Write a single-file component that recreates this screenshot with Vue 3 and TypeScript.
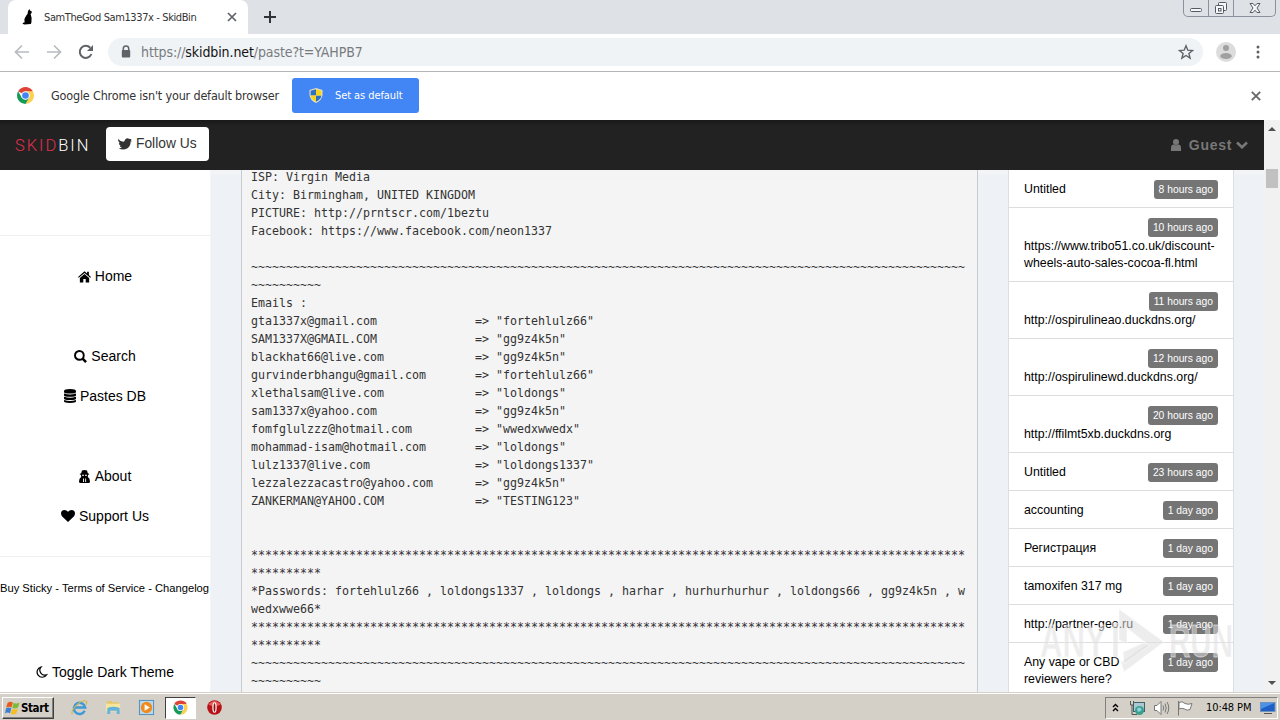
<script setup lang="ts">
interface Recent {
  title: string
  age: string
}

interface NavRow {
  label: string
  icon: string
}

const tilde = '~'.repeat(112)
const stars = '*'.repeat(112)

const accounts: [string, string][] = [
  ['gta1337x@gmail.com', 'fortehlulz66'],
  ['SAM1337X@GMAIL.COM', 'gg9z4k5n'],
  ['blackhat66@live.com', 'gg9z4k5n'],
  ['gurvinderbhangu@gmail.com', 'fortehlulz66'],
  ['xlethalsam@live.com', 'loldongs'],
  ['sam1337x@yahoo.com', 'gg9z4k5n'],
  ['fomfglulzzz@hotmail.com', 'wwedxwwedx'],
  ['mohammad-isam@hotmail.com', 'loldongs'],
  ['lulz1337@live.com', 'loldongs1337'],
  ['lezzalezzacastro@yahoo.com', 'gg9z4k5n'],
  ['ZANKERMAN@YAHOO.COM', 'TESTING123'],
]

const paste = [
  'ISP: Virgin Media',
  'City: Birmingham, UNITED KINGDOM',
  'PICTURE: http://prntscr.com/1beztu',
  'Facebook: https://www.facebook.com/neon1337',
  '',
  tilde,
  'Emails :',
  ...accounts.map(([mail, word]) => `${mail.padEnd(32)}=> "${word}"`),
  '',
  '',
  stars,
  '*Passwords: fortehlulz66 , loldongs1337 , loldongs , harhar , hurhurhurhur , loldongs66 , gg9z4k5n , wwedxwwe66*',
  stars,
  tilde,
].join('\n')

const recents: Recent[] = [
  { title: 'Untitled', age: '8 hours ago' },
  { title: 'https://www.tribo51.co.uk/discount-wheels-auto-sales-cocoa-fl.html', age: '10 hours ago' },
  { title: 'http://ospirulineao.duckdns.org/', age: '11 hours ago' },
  { title: 'http://ospirulinewd.duckdns.org/', age: '12 hours ago' },
  { title: 'http://ffilmt5xb.duckdns.org', age: '20 hours ago' },
  { title: 'Untitled', age: '23 hours ago' },
  { title: 'accounting', age: '1 day ago' },
  { title: 'Регистрация', age: '1 day ago' },
  { title: 'tamoxifen 317 mg', age: '1 day ago' },
  { title: 'http://partner-geo.ru', age: '1 day ago' },
  { title: 'Any vape or CBD reviewers here?', age: '1 day ago' },
]

const navGroups: NavRow[][] = [
  [{ label: 'Home', icon: 'home' }],
  [
    { label: 'Search', icon: 'search' },
    { label: 'Pastes DB', icon: 'db' },
  ],
  [
    { label: 'About', icon: 'about' },
    { label: 'Support Us', icon: 'heart' },
  ],
]
</script>

<template>
  <div class="desktop">
    <header class="tabstrip">
      <div class="tab">
        <svg class="cat" viewBox="0 0 12 16"><path d="M7.600 0 8 1.600 9.800 2.400 9.600 4 8.600 5 9.600 9 9.400 13.400 8.800 15 2.400 15.600.4 14.800 1.600 13.600 2.600 13.400 2.400 10 4 7 5.600 4.800 6 2Z" /></svg>
        <span class="tab-title">SamTheGod Sam1337x - SkidBin</span>
        <svg class="tab-x" viewBox="0 0 10 10"><path d="M1 1 9 9M9 1 1 9" /></svg>
      </div>
      <svg class="plus" viewBox="0 0 12 12"><path d="M6 0V12M0 6H12" /></svg>
      <div class="winctl">
        <span class="wc"><svg width="14" height="16"><rect x="1.500" y="8.500" width="11" height="3" rx="1" /></svg></span>
        <span class="wc"><svg width="14" height="16"><rect x="4.500" y="2.500" width="8" height="8" rx="1" /><rect x="1.500" y="5.500" width="8" height="8" rx="1" /><rect x="4.500" y="8.500" width="2.500" height="2.500" /></svg></span>
        <span class="wc wide"><svg width="14" height="16"><path d="M2 3.500H5L7 5.800 9 3.500H12L9 8 12 12.500H9L7 10.200 5 12.500H2L5 8Z" /></svg></span>
      </div>
    </header>

    <div class="toolbar">
      <svg class="nav dim" viewBox="0 0 16 16"><path d="M15 8H2M8 1.500 1.500 8 8 14.500" /></svg>
      <svg class="nav dim fwd" viewBox="0 0 16 16"><path d="M1 8H14M8 1.500 14.500 8 8 14.500" /></svg>
      <svg class="nav reload" viewBox="0 0 16 16"><path d="M13.400 10A6 6 0 1 1 12.200 3.800" /><path class="solid" d="M15 1V7H9Z" /></svg>
      <div class="omnibox">
        <svg class="lock" viewBox="0 0 10 13"><path d="M2.300 6V3.600a2.700 2.700 0 0 1 5.400 0V6" /><rect x=".8" y="5" width="8.400" height="7.500" rx="1" /></svg>
        <span class="url">https://<b>skidbin.net</b>/paste?t=YAHPB7</span>
        <svg class="star" viewBox="0 0 16 16"><path d="M8 1.800 9.800 6.200 14.500 6.500 10.900 9.500 12.100 14.100 8 11.500 3.900 14.100 5.100 9.500 1.500 6.500 6.200 6.200Z" /></svg>
      </div>
      <svg class="avatar" viewBox="0 0 20 20"><circle cx="10" cy="10" r="10" /><circle class="fg" cx="10" cy="6" r="3" /><ellipse class="fg" cx="10" cy="14" rx="5.800" ry="3" /></svg>
      <svg class="dots" viewBox="0 0 4 14"><circle cx="2" cy="2" r="1.500" /><circle cx="2" cy="7" r="1.500" /><circle cx="2" cy="12" r="1.500" /></svg>
    </div>

    <div class="infobar">
      <svg class="chrome" viewBox="0 0 20 20">
        <path fill="#dc4437" d="M10 10 1.340 5A10 10 0 0 1 18.660 5Z" />
        <path fill="#fdd050" d="M10 5H18.660A10 10 0 0 1 10 20L14.300 12.500Z" />
        <path fill="#159a58" d="M1.340 5A10 10 0 0 0 10 20L14.300 12.500 5.700 12.500Z" />
        <circle cx="10" cy="10" r="5" fill="#fff" /><circle cx="10" cy="10" r="3.900" fill="#4285f4" />
      </svg>
      <span class="info-text">Google Chrome isn't your default browser</span>
      <button class="set-default">
        <svg class="shield" viewBox="0 0 14 15">
          <path fill="#e8e2c0" d="M7 0 13.500 2V7Q13 12 7 15 1 12 .5 7V2Z" />
          <path fill="#2f6fc4" d="M7 1.300V7.500H1.600V2.800ZM7 7.500H12.400Q12 11.500 7 13.800Z" />
          <path fill="#f7d51d" d="M7 1.300V7.500H12.400V2.800ZM7 7.500H1.600Q2 11.500 7 13.800Z" />
        </svg>
        <span>Set as default</span>
      </button>
      <svg class="info-x" viewBox="0 0 10 10"><path d="M.8 .8 9.200 9.200M9.200 .8 .8 9.200" /></svg>
    </div>

    <main class="page">
      <div class="site">
        <nav class="navbar">
          <span class="brand"><em>SKID</em>BIN</span>
          <a class="follow">
            <svg viewBox="0 0 14 12"><path d="M0 1Q2.500 3.500 5.600 3.700 6.400 3.600 6.800 2.300 7.800 0 9.900.4 10.900.3 11.700 1.100L13.500 1 12.800 2.300 14 3.200 12.600 3.600Q12.800 8 9.500 10.200 5 12.800.6 10.300 2.500 10.600 4 9.600 2 9.200 1.700 7.800L2.900 7.600Q.8 7 .8 5L1.900 5.300Q-.2 3.200 0 1Z" /></svg>
            <span>Follow Us</span>
          </a>
          <span class="guest">
            <svg class="person" viewBox="0 0 10 12"><circle cx="5" cy="3" r="3" /><path d="M0 12V9Q0 5.500 2.500 5.500 5 7 7.500 5.500 10 5.500 10 9V12Z" /></svg>
            <span>Guest</span>
            <svg class="chev" viewBox="0 0 12 8"><path d="M1 1.500 6 6.300 11 1.500" /></svg>
          </span>
        </nav>

        <div class="body">
          <aside class="sidebar">
            <div class="menu">
              <div v-for="(group, g) in navGroups" :key="g" class="group">
                <a v-for="row in group" :key="row.label" class="item">
                  <svg v-if="row.icon === 'home'" class="ico" viewBox="0 0 14 13"><path d="M7 .8 9.800 3.200V1.300H11.700V4.800L14 7 13.200 7.900 7 2.700.8 7.900 0 7ZM7 3.800 12 8V13H8.300V9.300H5.700V13H2V8Z" /></svg>
                  <svg v-else-if="row.icon === 'search'" class="ico" viewBox="0 0 14 14"><g fill="none" stroke="#000"><circle cx="5.800" cy="5.800" r="4.700" stroke-width="2.100" /><path d="M9 9 13 13" stroke-width="2.700" /></g></svg>
                  <svg v-else-if="row.icon === 'db'" class="ico db" viewBox="0 0 12 14"><path d="M0 2Q0 0 6 0T12 2V3Q12 4.500 6 4.500T0 3ZM0 4.500Q6 6.500 12 4.500V6.200Q12 7.700 6 7.700T0 6.200ZM0 7.700Q6 9.700 12 7.700V9.400Q12 10.900 6 10.900T0 9.400ZM0 10.900Q6 12.900 12 10.900V12.300Q12 14 6 14T0 12.300Z" /></svg>
                  <svg v-else-if="row.icon === 'about'" class="ico about" viewBox="0 0 11 13"><path d="M3 .5Q5.500 -.3 8 .5L8.800 3.300 10.500 4 9 5 8.800 7Q11 8 11 11.500 11 13 9.500 13H1.500Q0 13 0 11.500 0 8 2.200 7L2 5 .5 4 2.200 3.300Z" /><path fill="#fff" d="M3 4.700H5V5.700H3ZM6 4.700H8V5.700H6ZM4 8.500H4.900V12H4ZM6.200 8.500H7.100V12H6.200Z" /></svg>
                  <svg v-else class="ico heart" viewBox="0 0 14 12"><path d="M7 12 1.200 6.500Q0 5 0 3.500 0 0 3.500 0 5.500 0 7 1.800 8.500 0 10.500 0 14 0 14 3.500 14 5 12.800 6.500Z" /></svg>
                  <span>{{ row.label }}</span>
                </a>
              </div>
            </div>
            <div class="legal">Buy Sticky - Terms of Service - Changelog</div>
            <a class="item toggle">
              <svg class="ico moon" viewBox="0 0 12 12"><path d="M5.500 1A5.200 5.200 0 1 0 11.200 8.800 5 5 0 0 1 5.500 1Z" /></svg>
              <span>Toggle Dark Theme</span>
            </a>
          </aside>

          <section class="content">
            <pre class="paste">{{ paste }}</pre>
            <ul class="recent">
              <li v-for="(r, i) in recents" :key="i"><span class="badge">{{ r.age }}</span><span class="title">{{ r.title }}</span></li>
            </ul>
          </section>
        </div>
      </div>

      <div class="scrollbar">
        <svg class="arrow" viewBox="0 0 8 4"><path d="M0 4 4 0 8 4Z" /></svg>
        <div class="thumb"></div>
        <svg class="arrow down" viewBox="0 0 8 4"><path d="M0 0 4 4 8 0Z" /></svg>
      </div>

      <svg class="watermark" viewBox="0 0 200 70">
        <g class="mark">
          <text x="3" y="51" textLength="66" lengthAdjust="spacingAndGlyphs">ANY</text>
          <path d="M76 17H81V51H76ZM82 3 127 36 87 66 84 56 110 38 90 22V38L82 34Z" />
          <path d="M86 46 108 36 112 40 87 58Z" />
          <text x="132" y="51" textLength="64" lengthAdjust="spacingAndGlyphs">RUN</text>
        </g>
      </svg>
    </main>

    <footer class="taskbar">
      <button class="start">
        <svg viewBox="0 0 15 14">
          <path fill="#e8591e" d="M2.500 2Q5-.2 7.800 1.500L6.500 6.500Q4 5 1.200 6.700Z" />
          <path fill="#7fba35" d="M8.600 1.800Q11 3.200 14.500 1.600L13 6.600Q10 8.200 7.300 6.800Z" />
          <path fill="#3b7fd4" d="M1 7.500Q3.500 5.700 6.300 7.300L5 12.300Q2.500 10.700 0 12.500Z" />
          <path fill="#f6bd25" d="M7.100 7.700Q10 9.200 12.800 7.500L11.400 12.500Q8.500 14.200 5.800 12.700Z" />
        </svg>
        <span>Start</span>
      </button>
      <div class="quick">
        <svg viewBox="0 0 18 18"><g fill="none"><path d="M14.500 12.500A6 6 0 1 1 15 9H4" stroke="#3c9ad8" stroke-width="2.600" /><path d="M1.500 16Q-.5 13 6 6.500T16.500 2.500Q17.500 4 15.500 6" stroke="#d6b54a" stroke-width="1.200" /></g></svg>
      </div>
      <div class="quick">
        <svg viewBox="0 0 18 18"><path fill="#e5c66a" d="M2 2H7L8 3.500H15V8H2Z" /><path fill="#f7e59d" d="M1 5H16V13H1Z" /><path fill="#63b3dd" d="M2.500 9.500Q9 7 15.500 9.500V16H12.500V12.500H5.500V16H2.500Z" /></svg>
      </div>
      <div class="quick">
        <svg viewBox="0 0 18 18"><rect x="1.500" y="1.500" width="15" height="15" fill="#b9d8ee" stroke="#4b8dbd" /><circle cx="9" cy="9" r="6" fill="#f08a1d" /><path fill="#fff" d="M7 5.500 12.500 9 7 12.500Z" /></svg>
      </div>
      <div class="quick active">
        <svg viewBox="-2 -2 24 24">
          <path fill="#dc4437" d="M10 10 1.340 5A10 10 0 0 1 18.660 5Z" />
          <path fill="#fdd050" d="M10 5H18.660A10 10 0 0 1 10 20L14.300 12.500Z" />
          <path fill="#159a58" d="M1.340 5A10 10 0 0 0 10 20L14.300 12.500 5.700 12.500Z" />
          <circle cx="10" cy="10" r="5" fill="#fff" /><circle cx="10" cy="10" r="3.900" fill="#4285f4" />
        </svg>
      </div>
      <div class="quick">
        <svg viewBox="0 0 18 18"><circle cx="9" cy="9" r="7.700" fill="#b81016" /><path fill="#e65a58" d="M2.500 6Q9-2 15.500 6 9 9 2.500 6Z" /><ellipse cx="9" cy="9" rx="2.300" ry="5.600" fill="#fff" /><ellipse cx="9" cy="9" rx="1" ry="4.600" fill="#8d1014" /></svg>
      </div>
      <div class="tray">
        <svg class="t-up" viewBox="0 0 7 9"><path d="M1 4 3.500 1.500 6 4M1 8 3.500 5.500 6 8" /></svg>
        <svg class="t-net" viewBox="0 0 16 16"><rect x="4.500" y="2.500" width="11" height="9" fill="#a9c8d4" stroke="#41606a" /><path d="M1.500 1V5H4.500V1M3 5V14.500H8" fill="none" stroke="#555" /><circle cx="10.500" cy="10.500" r="4.500" fill="#3aa08a" /><path d="M8 9Q10 6.500 12 8.500T9 12Z" fill="#8ed0e4" /></svg>
        <svg class="t-vol" viewBox="0 0 17 16"><path d="M1.500 5.500H4L8 1.500V14.500L4 10.500H1.500Z" fill="#fff" stroke="#777" /><path d="M10 5.500Q11.500 8 10 10.500M12 3.500Q14.500 8 12 12.500M14 2Q17.500 8 14 14" fill="none" stroke="#777" /></svg>
        <svg class="t-flag" viewBox="0 0 16 16"><path d="M1.500 1V15.500M2 2.500Q5 .5 8 3.500 11 5 15 3.500L13 9.500Q10 11 7.500 9 5 7.500 2 9Z" fill="#fff" stroke="#777" /></svg>
        <span class="clock">10:48 PM</span>
        <svg class="t-desk" viewBox="0 0 16 14"><rect x=".5" y="1.500" width="14.500" height="9" fill="#1d5fc4" stroke="#6f93bd" /><path d="M1 2H14.500L1 8Z" fill="#4b93e6" /><path d="M4 12.500H12" stroke="#555" /></svg>
      </div>
    </footer>
  </div>
</template>

<style>
body { margin: 0; overflow: hidden; }
</style>

<style scoped>
* { box-sizing: border-box; }
svg { display: block; flex: none; }
.desktop { width: 1280px; height: 720px; overflow: hidden; display: flex; flex-direction: column; background: #fff; font-family: "Liberation Sans", Arial, sans-serif; color: #000; }
.tabstrip { height: 34px; flex: none; background: #dee1e6; display: flex; padding-left: 8px; font-family: "DejaVu Sans Condensed", "DejaVu Sans", sans-serif; }
.tab { width: 240px; background: #fff; border-radius: 8px 8px 0 0; display: flex; align-items: center; padding-left: 14px; }
.cat { width: 12px; height: 16px; margin-right: 10px; }
.tab-title { width: 183px; font-size: 11px; letter-spacing: -.39px; color: #333; white-space: nowrap; }
.tab-x { width: 10px; height: 10px; fill: none; stroke: #5f6368; stroke-width: 1.700; }
.plus { width: 12px; height: 12px; margin: 11px 0 0 16px; stroke: #30343a; stroke-width: 2; }
.winctl { margin: 0 4px 0 auto; height: 17px; width: 93px; display: flex; border: 1px solid #8b929e; border-top: 0; border-radius: 0 0 5px 5px; }
.wc { width: 25px; display: flex; justify-content: center; border-right: 1px solid #8b929e; }
.wc.wide { flex: 1; border: 0; }
.wc svg { fill: #f6f7f9; stroke: #545a66; stroke-width: 1; }
.toolbar { height: 38px; flex: none; border-bottom: 1px solid #b4b6b8; display: flex; align-items: center; padding: 0 0 2px 14px; }
.nav { width: 16px; height: 16px; fill: none; stroke: #5f6368; stroke-width: 2; margin-right: 16px; }
.nav.dim { stroke: #b9bbbe; stroke-width: 1.700; }
.nav.reload { margin-right: 14px; }
.nav .solid { fill: #5f6368; stroke: none; }
.omnibox { width: 1095px; height: 28px; border-radius: 14px; background: #f0f3f5; display: flex; align-items: center; padding-left: 13px; font-family: "DejaVu Sans Condensed", "DejaVu Sans", sans-serif; }
.lock { width: 10px; height: 13px; fill: #5f6368; }
.lock path { fill: none; stroke: #5f6368; stroke-width: 1.500; }
.url { margin-left: 10px; font-size: 14px; letter-spacing: -.1px; color: #777b80; white-space: nowrap; }
.url b { font-weight: 400; color: #111; }
.star { width: 16px; height: 16px; margin: 0 9px 0 auto; fill: none; stroke: #5f6368; stroke-width: 1.400; }
.avatar { width: 20px; height: 20px; margin-left: 13px; fill: #dcdcdc; }
.avatar .fg { fill: #a0a0a0; }
.dots { width: 4px; height: 14px; margin-left: 20px; fill: #5f6368; }
.infobar { height: 48px; flex: none; display: flex; align-items: center; padding: 0 19px 1px 17px; font-family: "DejaVu Sans Condensed", "DejaVu Sans", sans-serif; }
.chrome { width: 17px; height: 17px; }
.info-text { width: 241px; margin-left: 17px; font-size: 12.500px; letter-spacing: -.18px; color: #333; white-space: nowrap; }
.set-default { width: 127px; height: 35px; border: 0; border-radius: 3px; background: #4285f4; color: #fff; display: flex; align-items: center; padding: 0 0 0 17px; font: 11px "DejaVu Sans Condensed", sans-serif; letter-spacing: -.08px; white-space: nowrap; }
.set-default span { margin-left: 12px; }
.shield { width: 14px; height: 15px; }
.info-x { width: 10px; height: 10px; margin-left: auto; fill: none; stroke: #666; stroke-width: 1.800; }
.page { position: relative; height: 572px; flex: none; display: flex; }
.site { width: 1264px; display: flex; flex-direction: column; }
.navbar { height: 50px; flex: none; background: linear-gradient(#191919, #222 6px); display: flex; align-items: center; padding: 0 15px; }
.brand { width: 91px; font: 300 16.500px Roboto, "Liberation Sans", sans-serif; letter-spacing: 1.950px; color: #fff; white-space: nowrap; }
.brand em { font-style: normal; color: #e02f4c; }
.follow { width: 103px; height: 34px; margin-top: -3px; border-radius: 4px; background: #fff; color: #333; font-size: 13.800px; display: flex; align-items: center; padding-left: 12px; white-space: nowrap; }
.follow svg { width: 14px; height: 12px; margin-right: 4px; fill: #333; }
.guest { margin-left: auto; display: flex; align-items: center; color: #777; font-weight: 700; font-size: 14px; letter-spacing: .7px; }
.person { width: 10px; height: 12px; margin-right: 8px; fill: #777; }
.chev { width: 12px; height: 8px; margin: 0 1px 0 4px; fill: none; stroke: #777; stroke-width: 2.600; }
.body { height: 522px; display: flex; }
.sidebar { width: 211px; flex: none; background: #fff; border-right: 1px solid #f3f5f6; padding-top: 65px; }
.menu { height: 322px; border: solid #eef0f1; border-width: 1px 0; padding-top: 20px; display: flex; flex-direction: column; gap: 40px; }
.item { height: 40px; display: flex; align-items: center; justify-content: center; font-size: 14px; white-space: nowrap; }
.ico { width: 13px; height: 13px; margin-right: 4px; }
.ico.db { width: 12px; height: 14px; }
.ico.about { width: 11px; margin-right: 5px; }
.ico.heart { width: 14px; height: 12px; }
.ico.moon { width: 13px; height: 12px; margin-right: 4px; fill: none; stroke: #000; stroke-width: 1.200; }
.legal { height: 62px; line-height: 62px; font-size: 11.180px; white-space: nowrap; }
.toggle { margin-top: 33px; padding-right: 1px; }
.content { flex: 1; background: linear-gradient(#f3f4f5 4px, #eef2f6 5px); display: flex; overflow: hidden; }
.paste { width: 737px; height: 524px; margin: -2px 0 0 30px; background: #f4f4f4; border: solid #c8cbd0; border-width: 0 1px; padding: 0 9px; overflow: hidden; font: 11.640px/18px "DejaVu Sans Mono", monospace; color: #333; white-space: pre-wrap; word-break: break-all; }
.recent { list-style: none; width: 226px; height: 522px; margin: 0 0 0 30px; padding: 0; background: #fff; border: solid #dcdfe2; border-width: 0 1px; overflow: hidden; }
.recent li { padding: 10px 15px; border-bottom: 1px solid #ddd; font-size: 12.350px; line-height: 17px; }
.title { position: relative; top: 1px; }
.badge { float: right; height: 19px; line-height: 19px; padding: 0 5px; border-radius: 3px; background: #757575; color: #fff; font-size: 10.300px; }
.scrollbar { width: 16px; background: #f1f1f1; display: flex; flex-direction: column; align-items: center; padding: 7px 0; }
.arrow { width: 8px; height: 4px; fill: #505050; }
.arrow.down { margin-top: auto; }
.thumb { width: 12px; height: 19px; margin-top: 38px; background: #c1c1c1; }
.watermark { position: absolute; left: 1037px; top: 486px; width: 200px; height: 70px; }
.mark { fill: rgba(222, 222, 222, .55); stroke: rgba(255, 255, 255, .5); stroke-width: 1; font: 700 46px "Liberation Sans", sans-serif; }
.taskbar { height: 28px; flex: none; background: #d4d0c8; border-top: 1px solid #d4d0c8; box-shadow: inset 0 1px #fff; display: flex; align-items: center; padding: 2px 2px 0; }
.start { width: 52px; height: 22px; border: 1px solid; border-color: #fff #404040 #404040 #fff; box-shadow: inset -1px -1px #808080; background: #d4d0c8; padding: 0 0 0 2px; display: flex; align-items: center; font: 700 11.500px "DejaVu Sans Condensed", sans-serif; letter-spacing: -.4px; margin-right: 9px; color: #000; }
.start svg { width: 15px; height: 14px; margin-right: 1px; }
.quick { width: 33.600px; height: 22px; display: flex; align-items: center; justify-content: center; }
.quick svg { width: 17px; height: 17px; }
.quick.active { width: 31px; margin: 0 1.300px; background: #fff; border: 1px solid; border-color: #404040 #fff #fff #404040; }
.tray { width: 173px; height: 22px; margin-left: auto; border: 1px solid; border-color: #808080 #fff #fff #808080; display: flex; align-items: center; padding-left: 6px; }
.t-up { width: 7px; height: 9px; fill: none; stroke: #000; stroke-width: 1.400; }
.t-net { width: 16px; height: 16px; margin-left: 10px; }
.t-vol { width: 17px; height: 16px; margin-left: 8px; }
.t-flag { width: 16px; height: 16px; margin-left: 7px; }
.clock { width: 54px; margin-left: 13px; font: 11px "DejaVu Sans Condensed", sans-serif; letter-spacing: -.1px; white-space: nowrap; }
.t-desk { width: 16px; height: 14px; }
</style>
